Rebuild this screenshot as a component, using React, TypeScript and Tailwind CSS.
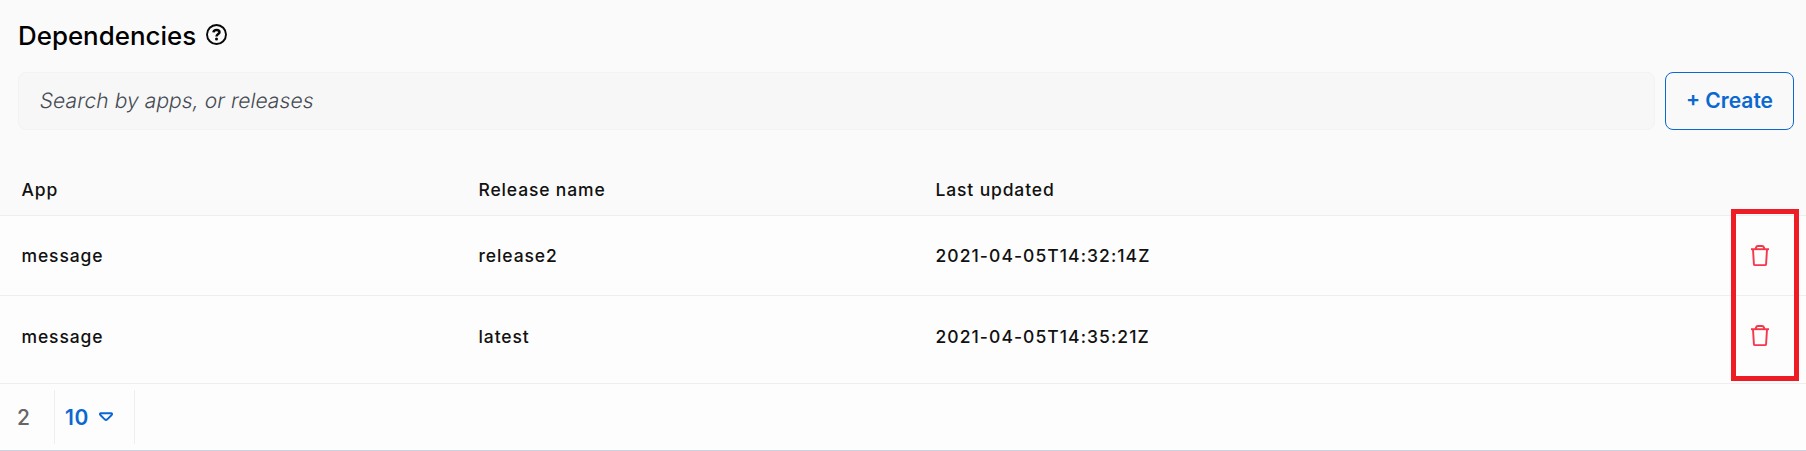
import React from 'react';

const rows = [
  { app: 'message', release: 'release2', updated: '2021-04-05T14:32:14Z' },
  { app: 'message', release: 'latest', updated: '2021-04-05T14:35:21Z' },
];

function HelpIcon() {
  return (
    <svg className="h-[21px] w-[21px]" viewBox="0 0 21 21" fill="none" stroke="#080808">
      <circle cx="10.5" cy="10.5" r="9.5" strokeWidth="1.9" />
      <path d="M7.5 8.4C7.6 6.7 8.9 5.9 10.6 5.9C12.3 5.9 13.5 6.7 13.5 8.2C13.5 10 10.5 10 10.5 12.4" strokeWidth="2.5" />
      <circle cx="10.5" cy="14.9" r="1.5" fill="#080808" stroke="none" />
    </svg>
  );
}

function TrashIcon() {
  return (
    <svg className="h-[22px] w-[18px]" viewBox="0 0 18 22" fill="none" stroke="#f5364c" strokeWidth="1.9" strokeLinejoin="round">
      <path d="M0 4.2H18" />
      <path d="M4.7 4.2C4.9 2 5.6 1 7 1H11C12.4 1 13.1 2 13.3 4.2" />
      <path d="M2 4.4L2.9 19.1Q3 20.1 4 20.1H14Q15 20.1 15.1 19.1L16 4.4" />
    </svg>
  );
}

function CaretIcon() {
  return (
    <svg className="h-[10px] w-[14px]" viewBox="0 0 14 10" fill="none" stroke="#0a68d0" strokeWidth="1.9" strokeLinejoin="round">
      <path d="M1.8 1.2H12.2Q13.8 1.7 12.6 3L8.3 7.3Q7 8.5 5.7 7.3L1.4 3Q0.2 1.7 1.8 1.2Z" />
    </svg>
  );
}

const columns = 'grid grid-cols-[457px_457px_1fr_96px] pl-[21.5px] text-[17.5px] font-medium';

export default function App() {
  return (
    <main className="relative flex h-[451px] w-full flex-col overflow-hidden bg-[#fafafa] font-['Inter',sans-serif] text-[#111111]">
      <header className="flex h-[72px] shrink-0 items-center pl-[18px]">
        <h1 className="text-[25.9px] leading-[72px] font-medium text-black">Dependencies</h1>
        <span className="mb-[3px] ml-[9.5px]"><HelpIcon /></span>
      </header>
      <div className="flex h-[58px] shrink-0 gap-[10px] pr-3 pl-[18px]">
        <div className="flex min-w-0 flex-1 rounded-lg border border-[#f3f3f3] bg-[#f7f7f7] px-[21px]">
          <input
            className="w-full -skew-x-[10deg] bg-transparent text-[21px] font-[350] tracking-[0.08px] outline-none placeholder:text-[#454a52]"
            placeholder="Search by apps, or releases"
          />
        </div>
        <button className="w-[129px] rounded-lg border border-[#0a68d0] bg-[#f9f9f9] text-[21px] font-semibold text-[#0a68d0]">
          + Create
        </button>
      </div>
      <section>
        <div className={`${columns} h-[86px] items-end border-b border-[#eeeeee] pb-[12px] leading-[26px] tracking-[0.85px]`}>
          <span>App</span>
          <span>Release name</span>
          <span>Last updated</span>
        </div>
        {rows.map((row, i) => (
          <div
            key={row.updated}
            className={`${columns} items-start border-b border-[#eeeeee] bg-[#fdfdfd] leading-[26px] tracking-[0.9px] ${i === 0 ? 'h-[80px] pt-[27px]' : 'h-[88px] pt-[28px]'}`}
          >
            <span>{row.app}</span>
            <span>{row.release}</span>
            <span className="tracking-[1.06px]">{row.updated}</span>
            <button className={`ml-[41px] ${i === 0 ? 'pt-[2px]' : 'pt-[1px]'}`} aria-label="Delete"><TrashIcon /></button>
          </div>
        ))}
      </section>
      <footer className="flex flex-1 items-center border-b border-[#ccd3e2] bg-[#fdfdfd] text-[21px]">
        <span className="w-[54px] pt-[2px] pl-[17px] font-medium text-[#666666]">2</span>
        <button className="flex h-[54px] w-[81px] items-center gap-[9.5px] border-x border-[#eeeeee] pt-[2px] pl-[10px] font-semibold text-[#0a68d0]">
          <span className="tracking-[0.7px]">10</span>
          <span className="mb-[3px]"><CaretIcon /></span>
        </button>
      </footer>
      <div className="pointer-events-none absolute top-[209px] left-[1731px] h-[172px] w-[68px] border-[5px] border-[#ee1c25]" />
    </main>
  );
}
